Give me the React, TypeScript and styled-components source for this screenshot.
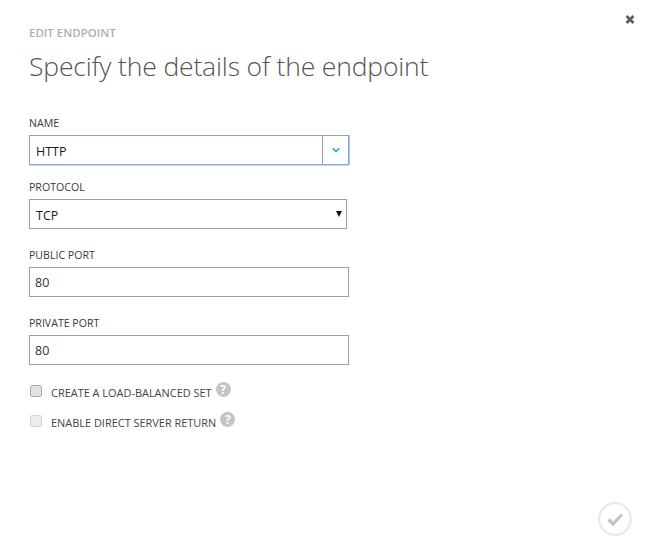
import { ChevronDown } from 'lucide-react';
import styled, { createGlobalStyle } from 'styled-components';

const GlobalStyle = createGlobalStyle`
  html, body {
    margin: 0;
    padding: 0;
    background: #fff;
    font-family: "Open Sans", "Noto Sans", "Liberation Sans", sans-serif;
  }
`;

const Dialog = styled.div`
  position: relative;
  width: 649px;
  height: 559px;
  box-sizing: border-box;
  padding: 25px 17px 0 29px;
  display: flex;
  flex-direction: column;
  overflow: hidden;
`;

const CloseButton = styled.button`
  position: absolute;
  top: 14px;
  right: 14px;
  width: 10px;
  height: 11px;
  padding: 0;
  border: none;
  background: none;
  display: flex;
  cursor: pointer;
`;

const Eyebrow = styled.div`
  font-size: 11.5px;
  line-height: 15px;
  font-weight: 600;
  color: #aeaeae;
`;

const Title = styled.h1`
  margin: 7px 0 0;
  font-size: 26.5px;
  line-height: 38px;
  letter-spacing: -0.16px;
  font-weight: 300;
  color: #555;
`;

const Form = styled.form`
  margin-top: 31px;
  display: flex;
  flex-direction: column;
`;

const Field = styled.div<{ $gap: number }>`
  display: flex;
  flex-direction: column;
  margin-bottom: ${p => p.$gap}px;
`;

const Label = styled.label`
  font-size: 10.6px;
  line-height: 14px;
  height: 14px;
  margin-bottom: 5px;
  color: #3a3a3a;
`;

const ComboBox = styled.div`
  width: 320px;
  height: 30px;
  box-sizing: border-box;
  display: flex;
  border: 1px solid #a0a0a0;
  border-top-color: #7fa6e6;
  border-right-color: #7fa6e6;
  border-bottom-color: #8fa8d4;
  box-shadow: 1px 0 0 #a9c3ee, 0 1px 0 #c5d6f3;
`;

const ComboInput = styled.input`
  flex: 1;
  min-width: 0;
  border: none;
  outline: none;
  padding: 2px 6px 0;
  font: 12.5px "Open Sans", "Noto Sans", sans-serif;
  color: #1a1a1a;
`;

const ComboToggle = styled.button`
  width: 26px;
  padding: 0;
  border: none;
  border-left: 1px solid #a0a0a0;
  background: #fff;
  color: #1fa8e0;
  display: flex;
  align-items: center;
  justify-content: center;
`;

const SelectWrap = styled.div`
  position: relative;
  width: 318px;
`;

const Select = styled.select`
  width: 100%;
  height: 30px;
  box-sizing: border-box;
  appearance: none;
  border: 1px solid #a0a0a0;
  border-radius: 0;
  outline: none;
  padding: 2px 6px 0;
  background: #fff;
  font: 12.5px "Open Sans", "Noto Sans", sans-serif;
  color: #1a1a1a;
`;

const SelectArrow = styled.span`
  position: absolute;
  top: 12px;
  right: 5px;
  width: 0;
  height: 0;
  border-left: 3.5px solid transparent;
  border-right: 3.5px solid transparent;
  border-top: 6px solid #111;
  pointer-events: none;
`;

const TextInput = styled.input`
  width: 320px;
  height: 30px;
  box-sizing: border-box;
  border: 1px solid #a0a0a0;
  outline: none;
  padding: 0 5px;
  font: 12.5px "Open Sans", "Noto Sans", sans-serif;
  color: #333;
`;

const CheckRow = styled.div`
  display: flex;
  align-items: center;
  height: 18px;
  margin-bottom: 12px;
`;

const CheckBox = styled.span<{ $disabled?: boolean }>`
  width: 12px;
  height: 12px;
  box-sizing: border-box;
  margin: 0 9px 0 1px;
  border-radius: 2.5px;
  border: 1px solid ${p => (p.$disabled ? '#d2d2d2' : '#a8a8a8')};
  background: ${p => (p.$disabled ? '#ececec' : '#e2e2e2')};
`;

const CheckLabel = styled.span`
  font-size: 10.95px;
  line-height: 14px;
  padding-top: 3px;
  color: #444;
`;

const Help = styled.span`
  width: 15px;
  height: 15px;
  margin: -4px 0 0 4px;
  border-radius: 50%;
  background: #c4c4c4;
  color: #fff;
  font-size: 12px;
  line-height: 15px;
  font-weight: 700;
  text-align: center;
`;

const Footer = styled.div`
  margin-top: auto;
  padding-bottom: 23px;
  display: flex;
  justify-content: flex-end;
`;

const ConfirmButton = styled.button`
  width: 34px;
  height: 34px;
  padding: 0;
  border: none;
  background: none;
  display: flex;
`;

const App = () => {
  return (
    <Dialog>
      <GlobalStyle />
      <CloseButton type="button" aria-label="Close">
        <svg width="10" height="11" viewBox="0 0 10 11">
          <path d="M1.5 2 L8.5 9 M8.5 2 L1.5 9" stroke="#5c5c5c" strokeWidth="2.6" fill="none" />
        </svg>
      </CloseButton>

      <Eyebrow>EDIT ENDPOINT</Eyebrow>
      <Title>Specify the details of the endpoint</Title>

      <Form>
        <Field $gap={15}>
          <Label>NAME</Label>
          <ComboBox>
            <ComboInput defaultValue="HTTP" />
            <ComboToggle type="button" aria-label="Open">
              <ChevronDown size={12} strokeWidth={3} />
            </ComboToggle>
          </ComboBox>
        </Field>

        <Field $gap={19}>
          <Label>PROTOCOL</Label>
          <SelectWrap>
            <Select defaultValue="TCP">
              <option>TCP</option>
              <option>UDP</option>
            </Select>
            <SelectArrow />
          </SelectWrap>
        </Field>

        <Field $gap={19}>
          <Label>PUBLIC PORT</Label>
          <TextInput defaultValue="80" />
        </Field>

        <Field $gap={17}>
          <Label>PRIVATE PORT</Label>
          <TextInput defaultValue="80" />
        </Field>

        <CheckRow>
          <CheckBox />
          <CheckLabel>CREATE A LOAD-BALANCED SET</CheckLabel>
          <Help>?</Help>
        </CheckRow>
        <CheckRow>
          <CheckBox $disabled />
          <CheckLabel>ENABLE DIRECT SERVER RETURN</CheckLabel>
          <Help>?</Help>
        </CheckRow>
      </Form>

      <Footer>
        <ConfirmButton type="button" aria-label="Confirm">
          <svg width="34" height="34" viewBox="0 0 34 34">
            <circle cx="17" cy="17" r="15.8" fill="none" stroke="#e8e8e8" strokeWidth="2.2" />
            <path d="M10.5 17.5 L15 22 L24 12.5" fill="none" stroke="#c4c4c4" strokeWidth="3.2" />
          </svg>
        </ConfirmButton>
      </Footer>
    </Dialog>
  );
};

export default App;
